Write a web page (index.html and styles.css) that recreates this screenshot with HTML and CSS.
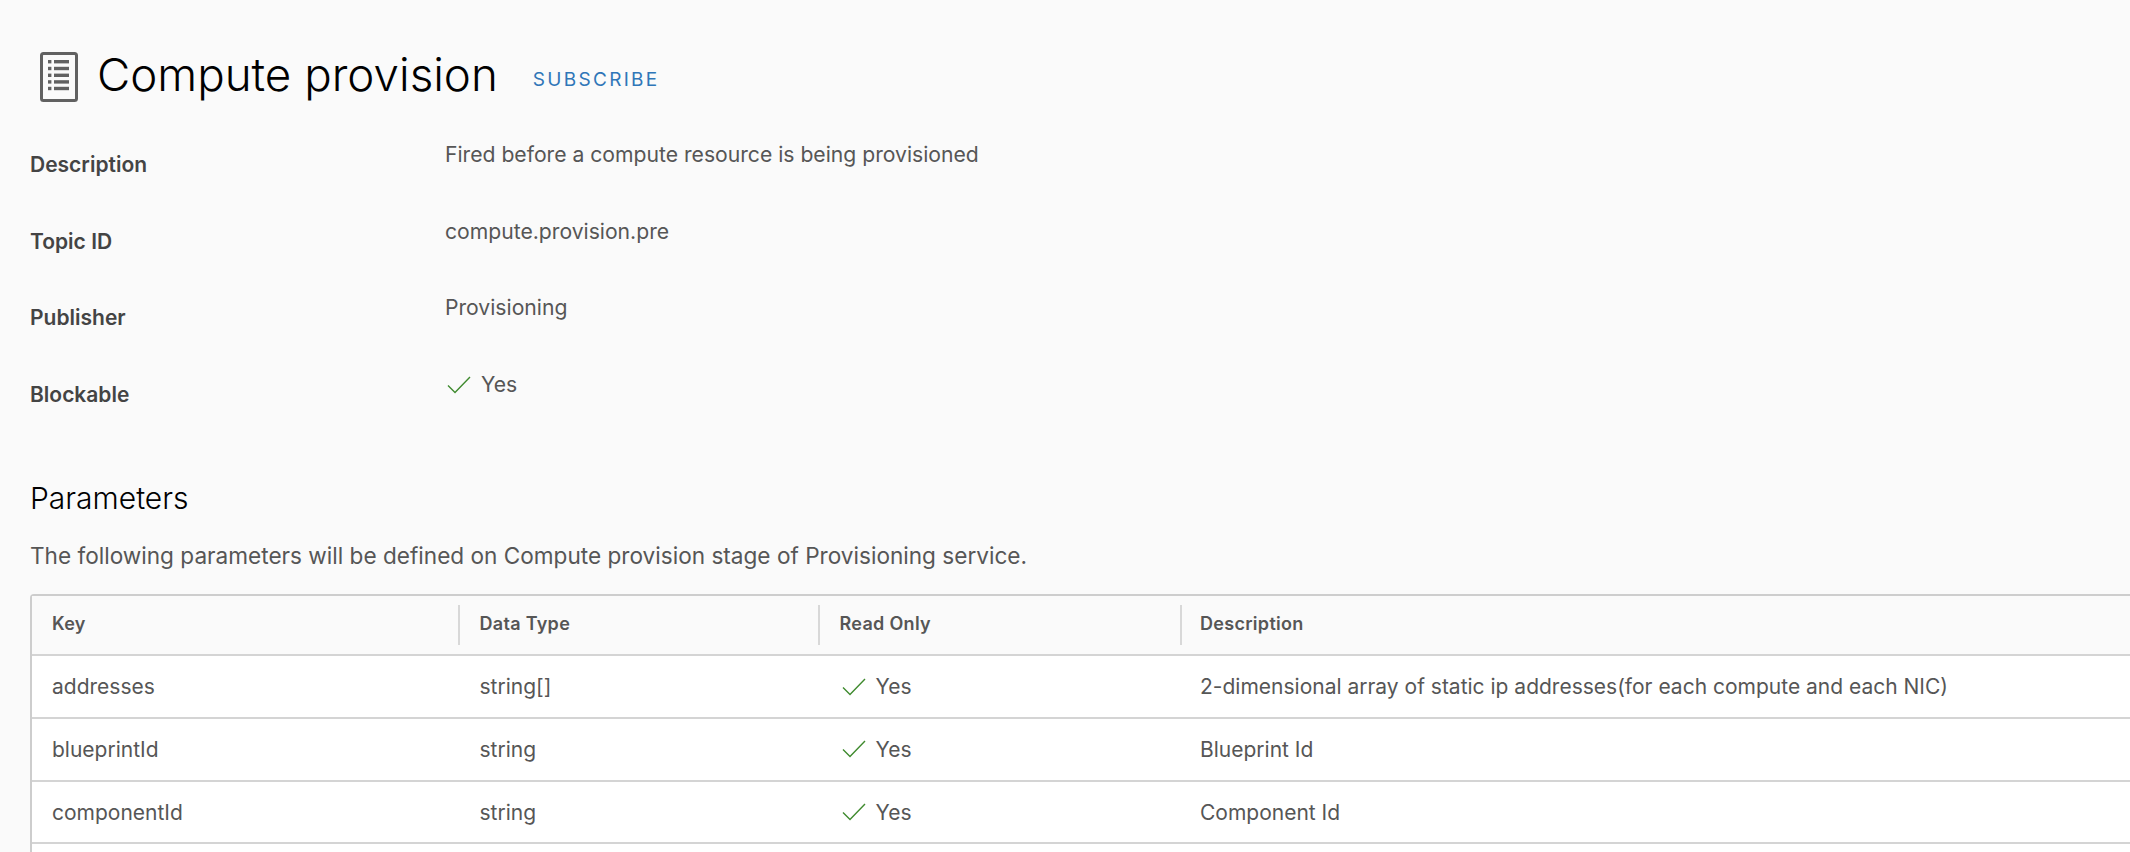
FILE: index.html
```html
<!DOCTYPE html>
<html lang="en">
<head>
<meta charset="utf-8">
<title>Compute provision</title>
<link rel="stylesheet" href="styles.css">
</head>
<body>
<main class="page">
  <header class="head">
    <svg class="doc-icon" width="38" height="50" viewBox="0 0 38 50" aria-hidden="true">
      <rect x="1.5" y="1.5" width="35" height="47" rx="2" fill="none" stroke="#616161" stroke-width="3"/>
      <g fill="#616161">
        <rect x="8" y="8" width="3.4" height="3.4"/><rect x="14" y="8" width="15" height="3.4"/>
        <rect x="8" y="14.8" width="3.4" height="3.4"/><rect x="14" y="14.8" width="15" height="3.4"/>
        <rect x="8" y="21.6" width="3.4" height="3.4"/><rect x="14" y="21.6" width="15" height="3.4"/>
        <rect x="8" y="28.2" width="3.4" height="3.4"/><rect x="14" y="28.2" width="15" height="3.4"/>
        <rect x="8" y="34.8" width="3.4" height="3.4"/><rect x="14" y="34.8" width="15" height="3.4"/>
      </g>
    </svg>
    <h1 class="title">Compute provision</h1>
    <a class="subscribe" href="#">SUBSCRIBE</a>
  </header>

  <dl class="details">
    <div class="detail"><dt>Description</dt><dd>Fired before a compute resource is being provisioned</dd></div>
    <div class="detail"><dt>Topic ID</dt><dd>compute.provision.pre</dd></div>
    <div class="detail"><dt>Publisher</dt><dd>Provisioning</dd></div>
    <div class="detail"><dt>Blockable</dt><dd class="yes"><svg class="check" width="24" height="18" viewBox="0 0 24 18" aria-hidden="true"><path d="M1 9.5 L8 16.5 L23 1" fill="none" stroke="#3f8a2e" stroke-width="1.4"/></svg>Yes</dd></div>
  </dl>

  <h2 class="section">Parameters</h2>
  <p class="intro">The following parameters will be defined on Compute provision stage of Provisioning service.</p>

  <div class="grid">
    <div class="row row-head">
      <div class="cell">Key</div>
      <div class="cell">Data Type</div>
      <div class="cell">Read Only</div>
      <div class="cell">Description</div>
    </div>
    <div class="row">
      <div class="cell">addresses</div>
      <div class="cell">string[]</div>
      <div class="cell yes"><svg class="check" width="24" height="18" viewBox="0 0 24 18" aria-hidden="true"><path d="M1 9.5 L8 16.5 L23 1" fill="none" stroke="#3f8a2e" stroke-width="1.4"/></svg>Yes</div>
      <div class="cell">2-dimensional array of static ip addresses(for each compute and each NIC)</div>
    </div>
    <div class="row">
      <div class="cell">blueprintId</div>
      <div class="cell">string</div>
      <div class="cell yes"><svg class="check" width="24" height="18" viewBox="0 0 24 18" aria-hidden="true"><path d="M1 9.5 L8 16.5 L23 1" fill="none" stroke="#3f8a2e" stroke-width="1.4"/></svg>Yes</div>
      <div class="cell">Blueprint Id</div>
    </div>
    <div class="row">
      <div class="cell">componentId</div>
      <div class="cell">string</div>
      <div class="cell yes"><svg class="check" width="24" height="18" viewBox="0 0 24 18" aria-hidden="true"><path d="M1 9.5 L8 16.5 L23 1" fill="none" stroke="#3f8a2e" stroke-width="1.4"/></svg>Yes</div>
      <div class="cell">Component Id</div>
    </div>
    <div class="row row-last"></div>
  </div>
</main>
</body>
</html>
```

FILE: styles.css
```css
* { box-sizing: border-box; }
html, body { margin: 0; height: 100%; overflow: hidden; }
body {
  background: #fafafa;
  color: #565656;
  font-family: Inter, "Open Sans", sans-serif;
  font-size: 21px;
}
.page { padding: 52px 0 0 30px; width: 2300px; }
.head { display: flex; align-items: center; height: 50px; padding-left: 10px; }
.doc-icon { flex: none; }
.title {
  margin: -5px 0 0 19px;
  font-size: 45.7px;
  font-weight: 300;
  line-height: 52px;
  color: #000;
}
.subscribe {
  margin: 5px 0 0 35px;
  color: #2f76b8;
  font-size: 19px;
  letter-spacing: 2.3px;
  text-decoration: none;
}
.details { margin: 39px 0 0; }
.detail {
  display: grid;
  grid-template-columns: 415px 1fr;
  height: 76.6px;
}
.detail dt { font-weight: 600; padding-top: 10px; line-height: 28px; color: #444; }
.detail dd { margin: 0; font-size: 21.15px; line-height: 28px; }
.yes { display: flex; align-items: center; }
.check { flex: none; margin-right: 10px; margin-left: 2px; }
.detail dd.yes { align-self: start; height: 28px; }
.section {
  margin: 31px 0 0;
  font-size: 30px;
  font-weight: 300;
  line-height: 40px;
  color: #000;
}
.intro { margin: 24px 0 0; font-size: 22.6px; line-height: 28px; }
.grid {
  margin: 24px 0 0;
  width: 2250px;
  border: 2px solid #cdcdcd;
  border-bottom: 0;
  border-right: 0;
  border-radius: 4px 0 0 0;
  background: #fff;
}
.row {
  display: grid;
  grid-template-columns: 426px 360px 362px 1fr;
  height: 62.7px;
  border-bottom: 2px solid #d4d4d4;
  align-items: center;
}
.row-head {
  height: 60px;
  background: #fafafa;
  font-size: 18px;
  font-weight: 600;
  letter-spacing: 0.3px;
  color: #565656;
}
.cell { padding-left: 21.5px; }
.cell:first-child { padding-left: 20px; }
.cell:last-child { padding-left: 20px; }
.row-head .cell { height: 40px; line-height: 38px; border-left: 2px solid #d8d8d8; padding-left: 19.5px; }
.row-head .cell:first-child { border-left: 0; padding-left: 20px; }
.row-head .cell:last-child { padding-left: 18px; }
.row-last { border-bottom: 0; }
```
